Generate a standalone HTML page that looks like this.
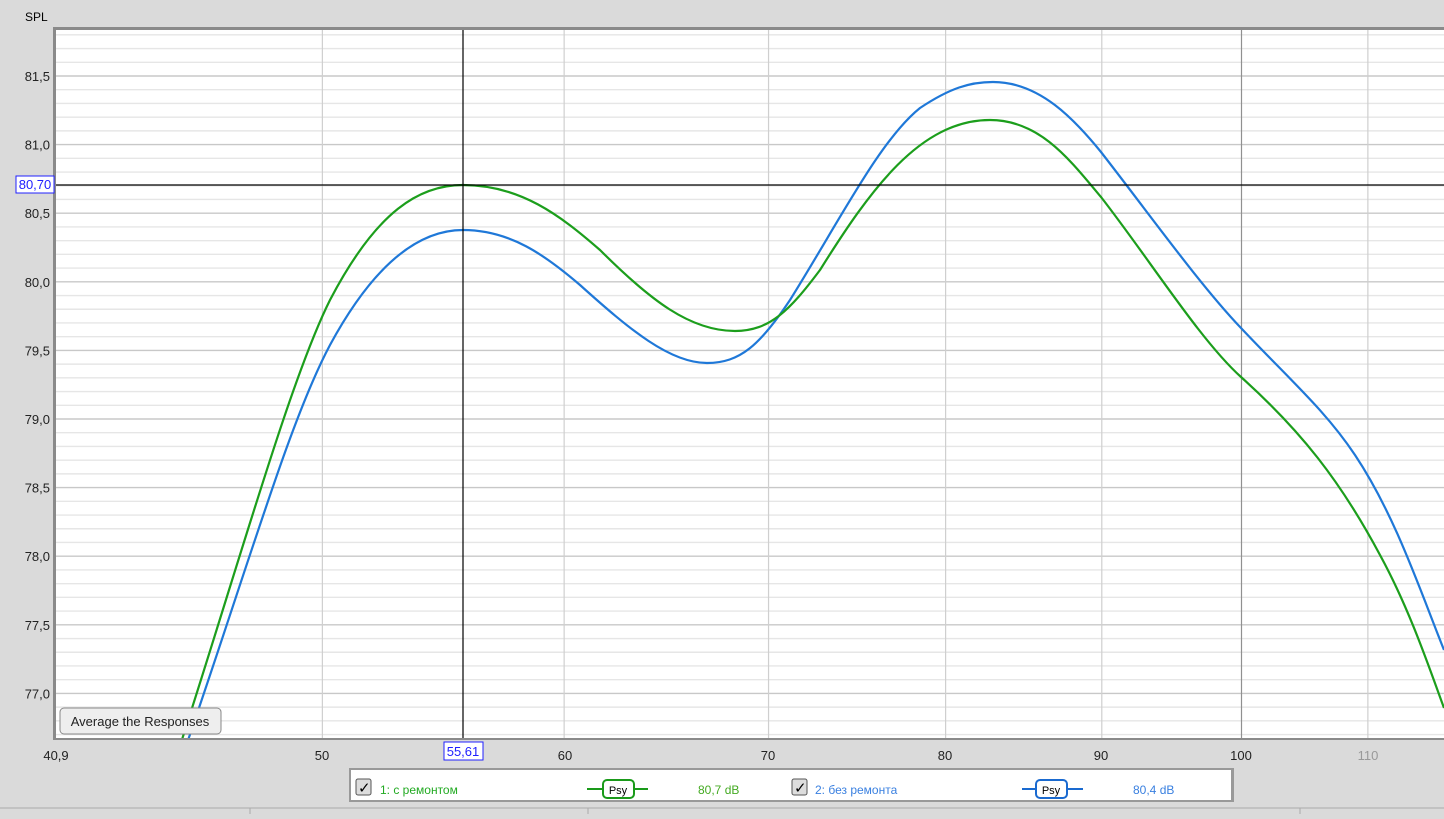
<!DOCTYPE html>
<html><head><meta charset="utf-8"><style>
body{margin:0;width:1444px;height:814px;overflow:hidden;background:#dadada;font-family:"Liberation Sans",sans-serif}
svg text{font-family:"Liberation Sans",sans-serif}
</style></head><body>
<svg id="s" width="1444" height="814" xmlns="http://www.w3.org/2000/svg">
<defs><clipPath id="cp"><rect x="56" y="30" width="1388" height="708"/></clipPath></defs>
<rect x="0" y="0" width="1444" height="814" fill="#dadada"/>
<rect x="53" y="27" width="1391" height="713" fill="#8a8a8a"/>
<rect x="56" y="30" width="1388" height="708" fill="#fff"/>
<g id="grid"></g>
<g clip-path="url(#cp)" fill="none" stroke-width="2.2">
<path stroke="#1f78d8" d="M184,752 C250,560 290,420 330,345 C375,262 420,230 463,230 C510,230 545,255 580,285 C630,330 670,363 707,363 C740,363 760,345 790,300 C840,220 880,140 920,108 C950,88 970,82 993,82 C1040,82 1075,120 1101,152 C1150,215 1200,285 1241,328 C1290,380 1325,410 1355,455 C1395,515 1420,590 1444,650"/>
<path stroke="#1c9e1c" d="M178,752 C240,560 290,380 330,300 C377,210 420,185 463,185 C520,185 560,215 600,250 C650,300 690,331 735,331 C770,331 790,310 820,270 C870,190 920,120 990,120 C1040,120 1070,160 1101,197 C1150,260 1200,340 1241,377 C1300,430 1340,480 1380,555 C1410,610 1430,670 1444,708"/>
</g>
<line x1="463" y1="30" x2="463" y2="738" stroke="#000" stroke-width="1.2"/>
<line x1="56" y1="185" x2="1444" y2="185" stroke="#000" stroke-width="1.2"/>
<text x="25" y="21" font-size="12" fill="#000">SPL</text>
<g id="ylab" font-size="13" fill="#222" text-anchor="end"></g>
<rect x="16" y="176" width="38" height="17" fill="#fff" stroke="#2020ff"/>
<text x="35" y="189" font-size="13" fill="#2020ff" text-anchor="middle">80,70</text>
<g font-size="13" fill="#222" text-anchor="middle">
<text x="56" y="760">40,9</text><text x="322" y="760">50</text><text x="565" y="760">60</text><text x="768" y="760">70</text><text x="945" y="760">80</text><text x="1101" y="760">90</text><text x="1241" y="760">100</text><text x="1368" y="760" fill="#999">110</text>
</g>
<rect x="444" y="742" width="39" height="18" fill="#fff" stroke="#2020ff"/>
<text x="463" y="756" font-size="13" fill="#2020ff" text-anchor="middle">55,61</text>
<rect x="60" y="708" width="161" height="26" rx="4" fill="#eee" stroke="#888"/>
<text x="140" y="726" font-size="13" fill="#222" text-anchor="middle">Average the Responses</text>
<rect x="349" y="768" width="885" height="34" fill="#999"/>
<rect x="351" y="770" width="880" height="30" fill="#fff"/>
<rect x="356" y="779" width="15" height="16" rx="2" fill="#ddd" stroke="#555"/>
<text x="358" y="793" font-size="15" fill="#000">✓</text>
<text x="380" y="794" font-size="12" fill="#22aa22">1: с ремонтом</text>
<line x1="587" y1="789" x2="648" y2="789" stroke="#1a9a1a" stroke-width="2"/>
<rect x="603" y="780" width="31" height="18" rx="4" fill="#fff" stroke="#1a9a1a" stroke-width="2"/>
<text x="618" y="794" font-size="11" fill="#000" text-anchor="middle">Psy</text>
<text x="698" y="794" font-size="12" fill="#44aa22">80,7 dB</text>
<rect x="792" y="779" width="15" height="16" rx="2" fill="#ddd" stroke="#555"/>
<text x="794" y="793" font-size="15" fill="#000">✓</text>
<text x="815" y="794" font-size="12" fill="#3a80e0">2: без ремонта</text>
<line x1="1022" y1="789" x2="1083" y2="789" stroke="#1a6ad0" stroke-width="2"/>
<rect x="1036" y="780" width="31" height="18" rx="4" fill="#fff" stroke="#1a6ad0" stroke-width="2"/>
<text x="1051" y="794" font-size="11" fill="#000" text-anchor="middle">Psy</text>
<text x="1133" y="794" font-size="12" fill="#3a80e0">80,4 dB</text>
<line x1="0" y1="808" x2="1444" y2="808" stroke="#aaa"/>
<line x1="250" y1="808" x2="250" y2="814" stroke="#aaa"/><line x1="588" y1="808" x2="588" y2="814" stroke="#aaa"/><line x1="1300" y1="808" x2="1300" y2="814" stroke="#aaa"/>
</svg>
<script>
var NS="http://www.w3.org/2000/svg";
function el(p,t,a){var e=document.createElementNS(NS,t);for(var k in a)e.setAttribute(k,a[k]);p.appendChild(e);return e;}
var g=document.getElementById('grid'),yl=document.getElementById('ylab');
function Y(v){return 76+(81.5-v)*137.2;}
for(var i=0;i<=60;i++){var v=76.6+i*0.1;var y=Y(v);if(y<30||y>738)continue;
 var maj=Math.abs((v*2)-Math.round(v*2))<0.01;
 el(g,'line',{x1:56,x2:1444,y1:y,y2:y,stroke:maj?'#c8c8c8':'#e6e6e6','stroke-width':1.4});
 if(maj){var t=el(yl,'text',{x:50,y:y+5});t.textContent=v.toFixed(1).replace('.',',');}}
function X(f){return 56+Math.log(f/40.9)*1326;}
for(var f=50;f<=110;f+=10){var x=X(f);el(g,'line',{x1:x,x2:x,y1:30,y2:738,stroke:(f==100)?'#909090':'#cfcfcf','stroke-width':1.2});}
</script>
</body></html>
